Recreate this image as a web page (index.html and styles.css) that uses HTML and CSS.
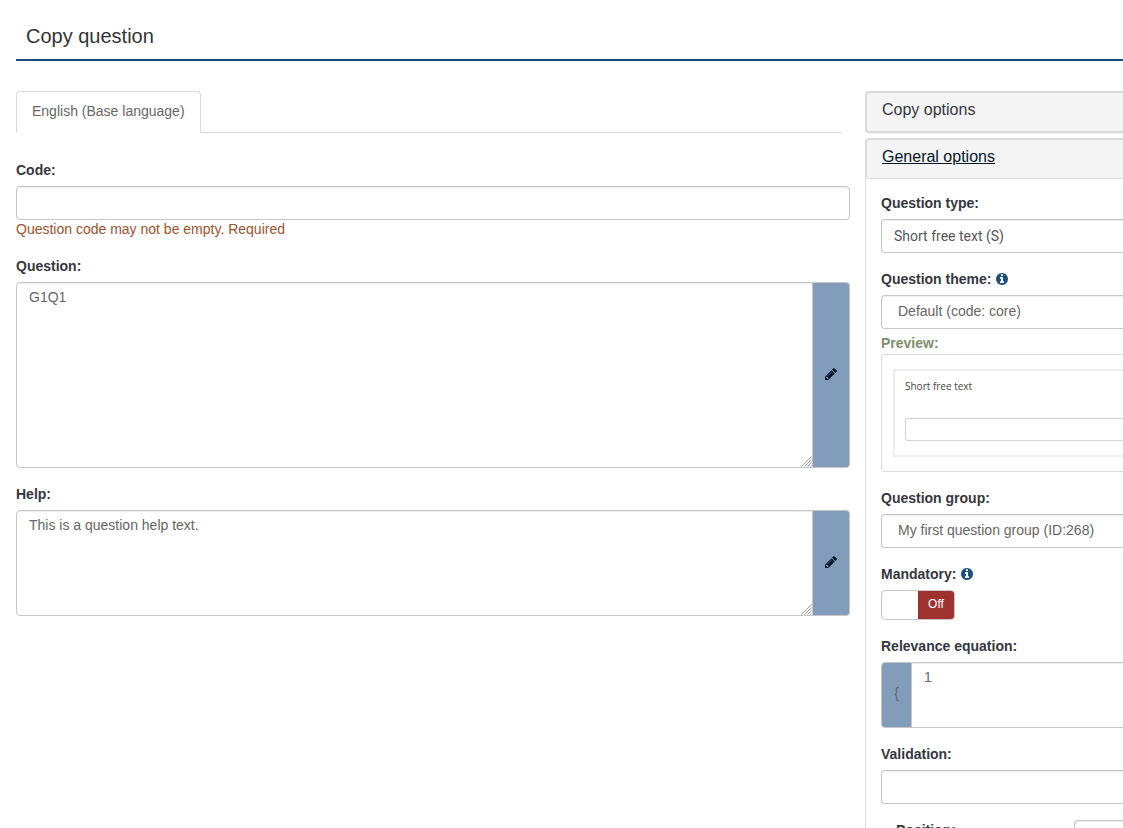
FILE: index.html
```html
<!DOCTYPE html>
<html lang="en">

<head>
    <meta charset="UTF-8">
    <meta name="viewport" content="width=device-width, initial-scale=1.0">
    <title>Copy question</title>
    <link rel="stylesheet" href="styles.css">
</head>

<body>
    <!-- Shared icons -->
    <svg class="icon-defs" aria-hidden="true">
        <symbol id="icon-pencil" viewBox="0 0 1792 1792">
            <path d="M491 1536l91-91-235-235-91 91v107h128v128h107zm523-928q0-22-22-22-10 0-17 7l-542 542q-7 7-7 17 0 22 22 22 10 0 17-7l542-542q7-7 7-17zm-54-192l416 416-832 832h-416v-416zm683 96q0 53-37 90l-166 166-416-416 166-165q36-38 90-38 53 0 91 38l235 234q37 39 37 91z"/>
        </symbol>
        <symbol id="icon-info" viewBox="0 0 1792 1792">
            <path d="M1152 1376v-160q0-14-9-23t-23-9h-96v-512q0-14-9-23t-23-9h-320q-14 0-23 9t-9 23v160q0 14 9 23t23 9h96v320h-96q-14 0-23 9t-9 23v160q0 14 9 23t23 9h448q14 0 23-9t9-23zm-128-896v-160q0-14-9-23t-23-9h-192q-14 0-23 9t-9 23v160q0 14 9 23t23 9h192q14 0 23-9t9-23zm640 416q0 209-103 385.5t-279.5 279.5-385.5 103-385.5-103-279.5-279.5-103-385.5 103-385.5 279.5-279.5 385.5-103 385.5 103 279.5 279.5 103 385.5z"/>
        </symbol>
        <symbol id="icon-grip" viewBox="0 0 11 11">
            <path d="M0.5 10.5l10-10M3.5 10.5l7-7M6.5 10.5l4-4M9.5 10.5l1-1" fill="none" stroke="#999"/>
        </symbol>
    </svg>

    <h1 class="page-title">Copy question</h1>

    <form class="layout">
        <!-- Question texts -->
        <main class="editor">
            <nav class="tabs">
                <a class="tab" href="#">English (Base language)</a>
            </nav>

            <div class="form-group">
                <label for="code">Code:</label>
                <input class="form-control" type="text" id="code">
                <p class="help-text">Question code may not be empty. Required</p>
            </div>

            <div class="form-group">
                <label for="question">Question:</label>
                <div class="input-group">
                    <textarea class="form-control question-text" id="question">G1Q1</textarea>
                    <svg class="grip" aria-hidden="true"><use href="#icon-grip"/></svg>
                    <button class="addon" type="button" aria-label="Edit question">
                        <svg class="icon"><use href="#icon-pencil"/></svg>
                    </button>
                </div>
            </div>

            <div class="form-group">
                <label for="help">Help:</label>
                <div class="input-group">
                    <textarea class="form-control help-area" id="help">This is a question help text.</textarea>
                    <svg class="grip" aria-hidden="true"><use href="#icon-grip"/></svg>
                    <button class="addon" type="button" aria-label="Edit help">
                        <svg class="icon"><use href="#icon-pencil"/></svg>
                    </button>
                </div>
            </div>
        </main>

        <!-- Options -->
        <aside class="options">
            <section class="panel">
                <h2 class="panel-heading"><a href="#">Copy options</a></h2>
            </section>

            <section class="panel">
                <h2 class="panel-heading"><a class="active" href="#">General options</a></h2>
                <div class="panel-body">
                    <div class="form-group">
                        <label for="type">Question type:</label>
                        <select class="form-control type-select" id="type">
                            <option>Short free text (S)</option>
                        </select>
                    </div>

                    <div class="form-group">
                        <label for="theme">Question theme: <svg class="icon info"><use href="#icon-info"/></svg></label>
                        <select class="form-control indent" id="theme">
                            <option>Default (code: core)</option>
                        </select>
                        <p class="preview-label">Preview:</p>
                        <div class="preview">
                            <div class="preview-card">
                                <label class="preview-title" for="sample">Short free text</label>
                                <input class="preview-input" type="text" id="sample">
                            </div>
                        </div>
                    </div>

                    <div class="form-group">
                        <label for="group">Question group:</label>
                        <select class="form-control indent" id="group">
                            <option>My first question group (ID:268)</option>
                        </select>
                    </div>

                    <div class="form-group">
                        <label for="mandatory">Mandatory: <svg class="icon info"><use href="#icon-info"/></svg></label>
                        <div class="switch">
                            <input type="checkbox" id="mandatory">
                            <span class="switch-off">Off</span>
                        </div>
                    </div>

                    <div class="form-group">
                        <label for="relevance">Relevance equation:</label>
                        <div class="input-group">
                            <span class="addon-left">{</span>
                            <textarea class="form-control relevance" id="relevance">1</textarea>
                        </div>
                    </div>

                    <div class="form-group">
                        <label for="validation">Validation:</label>
                        <input class="form-control" type="text" id="validation">
                    </div>

                    <div class="position-row">
                        <label for="position">Position:</label>
                        <select class="form-control" id="position">
                            <option></option>
                        </select>
                    </div>
                </div>
            </section>
        </aside>
    </form>
</body>

</html>
```

FILE: styles.css
```css
* {
    box-sizing: border-box;
}

body {
    height: 100vh;
    margin: 0;
    padding: 16px 0 0 16px;
    overflow: hidden;
    background-color: white;
    color: #666;
    font-family: "Liberation Sans", Arial, sans-serif;
    font-size: 14px;
    line-height: 20px;
}

a {
    color: inherit;
    text-decoration: none;
}

.icon-defs {
    display: none;
}

.icon {
    width: 14px;
    height: 14px;
    fill: #06182d;
}

.info {
    fill: #1f4f7f;
    vertical-align: -2px;
}

/* Title */
.page-title {
    margin: 0 0 30px;
    padding: 8px 10px 11px;
    border-bottom: 2px solid #1f4f7f;
    color: #333;
    font-size: 20px;
    font-weight: normal;
    line-height: 24px;
}

.layout {
    display: flex;
    gap: 15px;
}

.editor {
    flex: 1;
    min-width: 0;
}

/* Tabs */
.tabs {
    display: flex;
    margin: 0 8px 27px 0;
    border-bottom: 1px solid #dadada;
}

.tab {
    margin-bottom: -1px;
    padding: 9px 15px 11px;
    border: 1px solid #dadada;
    border-bottom-color: white;
    border-radius: 4px 4px 0 0;
}

/* Forms */
.form-group {
    margin-bottom: 16px;
}

label {
    display: block;
    margin-bottom: 6px;
    color: #36363f;
    font-weight: bold;
}

.form-control {
    display: block;
    width: 100%;
    height: 34px;
    margin: 0;
    padding: 6px 12px;
    border: 1px solid #c6c6c6;
    border-radius: 4px;
    background-color: white;
    box-shadow: inset 0 1px 1px rgba(0, 0, 0, 0.075);
    color: #666;
    font: inherit;
    appearance: none;
    resize: none;
}

.help-text {
    margin: 0;
    padding-bottom: 2px;
    color: #a0522d;
    line-height: 18px;
}

.input-group {
    display: flex;
    position: relative;
}

.input-group .form-control {
    flex: 1;
    min-width: 0;
    padding-top: 4px;
}

.input-group .question-text {
    height: 186px;
    border-radius: 4px 0 0 4px;
}

.input-group .help-area {
    height: 106px;
    border-radius: 4px 0 0 4px;
}

.input-group .relevance {
    height: 66px;
    border-left: 0;
    border-right: 0;
    border-radius: 0;
}

.grip {
    position: absolute;
    right: 38px;
    bottom: 1px;
    width: 11px;
    height: 11px;
}

.addon {
    display: flex;
    align-items: center;
    justify-content: center;
    width: 37px;
    padding: 0 0 2px;
    border: 1px solid #c6c6c6;
    border-left: 0;
    border-radius: 0 4px 4px 0;
    background-color: #819dbb;
}

.addon-left {
    display: flex;
    align-items: center;
    justify-content: center;
    width: 31px;
    padding-bottom: 4px;
    border: 1px solid #c6c6c6;
    border-radius: 4px 0 0 4px;
    background-color: #819dbb;
}

/* Options panels, they run to the right edge of the window */
.options {
    flex: 0 0 258px;
}

.options .form-control,
.options .panel,
.panel-heading {
    border-right: 0;
    border-top-right-radius: 0;
    border-bottom-right-radius: 0;
}

.panel {
    margin-bottom: 5px;
    border: 1px solid #dadada;
    border-radius: 4px;
    box-shadow: 0 1px 1px rgba(0, 0, 0, 0.05);
}

.panel-heading {
    margin: 0;
    padding: 7px 15px 11px;
    border: 1px solid #dadada;
    border-right: 0;
    border-radius: 3px 0 0 3px;
    background-color: #f4f4f4;
    color: #36363f;
    font-size: 16px;
    font-weight: normal;
}

.panel-heading .active {
    color: #06182d;
    text-decoration: underline;
}

.panel-body {
    padding: 14px 0 15px 15px;
}

.type-select {
    font-family: Roboto, sans-serif;
    color: #555;
}

.indent {
    padding: 5px 16px 7px;
}

/* Theme preview */
.preview-label {
    margin: 4px 0 1px;
    color: #7d8e6b;
    font-weight: bold;
}

.preview {
    padding: 14px 0 14px 11px;
    border: 1px solid #dadada;
    border-right: 0;
    border-radius: 4px 0 0 4px;
}

.preview-card {
    padding: 5px 0 14px 10px;
    border: 2px solid #eee;
    border-right: 0;
}

.preview-title {
    margin-bottom: 22px;
    color: #444;
    font-family: "Open Sans", sans-serif;
    font-size: 10px;
    font-weight: normal;
}

.preview-input {
    display: block;
    width: 100%;
    height: 23px;
    border: 1px solid #d4d4d4;
    border-right: 0;
    border-radius: 3px 0 0 3px;
}

/* On / off switch */
.switch {
    display: flex;
    position: relative;
    justify-content: flex-end;
    width: 74px;
    height: 30px;
    border: 1px solid #c6c6c6;
    border-radius: 4px;
    overflow: hidden;
}

.switch input {
    position: absolute;
    inset: 0;
    margin: 0;
    appearance: none;
    cursor: pointer;
}

.switch-off {
    width: 36px;
    padding-top: 3px;
    background-color: #9f322e;
    color: white;
    font-size: 12px;
    text-align: center;
}

.position-row {
    display: flex;
    justify-content: space-between;
    padding-left: 15px;
}

.position-row .form-control {
    width: 49px;
}
```
